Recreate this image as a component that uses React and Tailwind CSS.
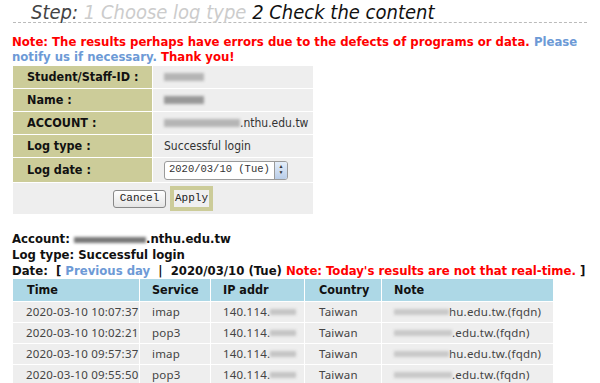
import React from 'react';

const Blur = ({ w, h = 8, tone = 'bg-[#b5b5b5]' }) => (
  <span className={`inline-block align-middle ${tone} blur-[1.5px]`} style={{ width: w, height: h }} />
);

const formRows = [
  { label: 'Student/Staff-ID', value: <Blur w={40} /> },
  { label: 'Name', value: <Blur w={40} tone="bg-[#999]" /> },
  { label: 'ACCOUNT', value: <><Blur w={76} />.nthu.edu.tw</> },
  { label: 'Log type', value: 'Successful login' },
];

const logs = [
  ['2020-03-10 10:07:37', 'imap', 'Taiwan', 'hu.edu.tw.(fqdn)', 55],
  ['2020-03-10 10:02:21', 'pop3', 'Taiwan', '.edu.tw.(fqdn)', 58],
  ['2020-03-10 09:57:37', 'imap', 'Taiwan', 'hu.edu.tw.(fqdn)', 55],
  ['2020-03-10 09:55:50', 'pop3', 'Taiwan', '.edu.tw.(fqdn)', 58],
];

const cell = "h-[20px] bg-[#eeeeee] flex items-center whitespace-nowrap font-['Noto_Sans',sans-serif] font-stretch-normal text-[11.5px] tracking-[0.2px] text-[#444]";

export default function App() {
  return (
    <div className="w-[600px] h-[383px] overflow-hidden bg-white font-['DejaVu_Sans',sans-serif] font-stretch-condensed">
      {/* Step title */}
      <div className="mx-[13px] border-b border-dashed border-[#bbb] h-[23px] pl-[18px] text-[20px] leading-[25px] italic whitespace-nowrap">
        <span className="text-[#444]">Step: </span>
        <span className="text-[#ccc]">1 Choose log type </span>
        <span className="text-[#111]">2 Check the content</span>
      </div>

      {/* note */}
      <p className="mt-[11px] px-[12px] text-[13px] leading-[15px] font-bold text-[#ff0000]">
        Note: The results perhaps have errors due to the defects of programs or data.{' '}
        <span className="text-[#6d9ad6]">Please notify us if necessary.</span> Thank you!
      </p>

      {/* query form */}
      <div className="ml-[13px] mt-[2px] w-[300px] grid grid-cols-[139px_160px] gap-px bg-white text-[12px]">
        {formRows.map((r) => (
          <React.Fragment key={r.label}>
            <div className="h-[22px] bg-[#cccc99] pl-[14px] flex items-center font-bold text-[12.5px] text-[#111]">
              {r.label} :
            </div>
            <div className="h-[22px] bg-[#eeeeee] pl-[11px] flex items-center text-[#333]">{r.value}</div>
          </React.Fragment>
        ))}
        <div className="h-[24px] bg-[#cccc99] pl-[14px] flex items-center font-bold text-[12.5px] text-[#111]">Log date :</div>
        <div className="h-[24px] bg-[#eeeeee] pl-[11px] flex items-center">
          <div className="w-[124px] h-[19px] border border-[#9a9a9a] rounded-[3px] bg-white flex items-center font-['Liberation_Mono',monospace] font-stretch-normal text-[10.5px] text-[#333] pl-[4px] whitespace-nowrap">
            <span className="flex-1">2020/03/10 (Tue)</span>
            <span className="w-[13px] h-full rounded-r-[2px] bg-gradient-to-b from-[#e4eefa] to-[#b9cde8] border-l border-[#9a9a9a] flex flex-col items-center justify-center text-[5px] leading-[6px] text-[#333]">
              <span>▲</span>
              <span>▼</span>
            </span>
          </div>
        </div>
        <div className="col-span-2 h-[31px] bg-[#eeeeee] flex items-center justify-center gap-[4px] font-['Liberation_Mono',monospace] font-stretch-normal text-[11px] text-[#222]">
          <span className="w-[53px] h-[18px] border border-[#888] rounded-[3px] bg-gradient-to-b from-white to-[#e5e5e5] flex items-center justify-center">Cancel</span>
          <span className="w-[43px] h-[25px] border-[4px] border-[#cccc99] bg-[#f0f0f0] flex items-center justify-center">Apply</span>
        </div>
      </div>

      {/* results */}
      <div className="mt-[17px] pl-[12px] text-[13px] leading-[16px] font-bold text-[#111] whitespace-nowrap">
        <div>Account: <Blur w={72} h={6} tone="bg-[#777]" />.nthu.edu.tw</div>
        <div>Log type: Successful login</div>
        <div>
          Date:&nbsp; [ <span className="text-[#6d9ad6]">Previous day</span> &nbsp;|&nbsp; 2020/03/10 (Tue){' '}
          <span className="text-[#ff0000]">Note: Today's results are not that real-time.</span> ]
        </div>
      </div>

      <div className="ml-[13px] w-[540px] grid grid-cols-[126px_70px_93px_76px_171px] gap-px bg-white">
        {['Time', 'Service', 'IP addr', 'Country', 'Note'].map((h, i) => (
          <div key={h} className={`h-[22px] bg-[#add8e6] flex items-center font-bold text-[12.5px] text-[#111] ${i === 0 || i === 3 ? 'pl-[14px]' : 'pl-[12px]'}`}>
            {h}
          </div>
        ))}
        {logs.map(([t, s, c, n, nb], i) => (
          <React.Fragment key={i}>
            <div className={`${cell} pl-[13px]`}>{t}</div>
            <div className={`${cell} pl-[12px]`}>{s}</div>
            <div className={`${cell} pl-[12px]`}>140.114.<Blur w={26} h={6} tone="bg-[#c4c4c4]" /></div>
            <div className={`${cell} pl-[14px]`}>{c}</div>
            <div className={`${cell} pl-[12px]`}><Blur w={nb} h={6} tone="bg-[#c8c8c8]" />{n}</div>
          </React.Fragment>
        ))}
      </div>
    </div>
  );
}
